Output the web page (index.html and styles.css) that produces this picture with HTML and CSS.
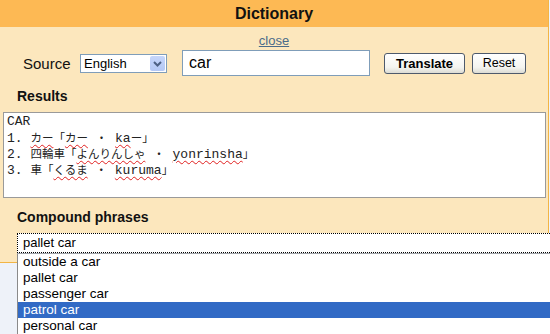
FILE: index.html
```html
<!DOCTYPE html>
<html>
<head>
<meta charset="utf-8">
<link rel="stylesheet" href="styles.css">
</head>
<body>
<div class="panel">
  <div class="header">Dictionary</div>
  <div class="close-row"><a class="close" href="#">close</a></div>
  <div class="form-row">
    <span class="label">Source</span>
    <div class="select">
      <span class="select-text">English</span>
      <span class="select-btn">
        <svg width="15" height="15" viewBox="0 0 15 15"><path d="M4 6 L7.5 9.5 L11 6" fill="none" stroke="#4d6185" stroke-width="2"/></svg>
      </span>
    </div>
    <div class="input">car</div>
    <button class="btn btn-bold">Translate</button>
    <button class="btn">Reset</button>
  </div>
  <div class="section-title">Results</div>
  <div class="results">
    <div class="line">CAR</div>
    <div class="line">1. <span class="ja sp">カー</span><span class="ja">「</span><span class="ja sp">カー</span> <span class="ja">・</span> <span class="sp">ka</span><span class="ja">ー」</span></div>
    <div class="line">2. <span class="ja">四輪車「</span><span class="ja sp">よんりんしゃ</span> <span class="ja">・</span> <span class="sp">yonrinsha</span><span class="ja">」</span></div>
    <div class="line">3. <span class="ja">車「</span><span class="ja sp">くるま</span> <span class="ja">・</span> <span class="sp">kuruma</span><span class="ja">」</span></div>
  </div>
  <div class="section-title section-title-2">Compound phrases</div>
  <div class="combo">pallet car</div>
  <ul class="dropdown">
    <li>outside a car</li>
    <li>pallet car</li>
    <li>passenger car</li>
    <li class="selected">patrol car</li>
    <li>personal car</li>
  </ul>
</div>
</body>
</html>
```
FILE: styles.css
```css
html, body {
  margin: 0;
  padding: 0;
}
body {
  background: #eef2f9;
  font-family: "Liberation Sans", Arial, sans-serif;
  width: 550px;
  height: 334px;
  overflow: hidden;
}
.panel {
  position: relative;
  width: 548px;
  background: #fce7bd;
  border-right: 1px solid #f2b545;
  border-bottom: 1px solid #f2b545;
  padding-bottom: 9px;
}
.header {
  height: 27px;
  line-height: 27px;
  background: #fdb954;
  text-align: center;
  font-weight: bold;
  font-size: 16px;
  color: #111;
}
.close-row {
  text-align: center;
  padding-top: 6px;
  height: 17px;
  font-size: 13px;
  line-height: 15px;
}
.close {
  color: #4a6b8a;
  text-decoration: underline;
}
.form-row {
  display: flex;
  align-items: center;
  height: 26px;
  padding-left: 23px;
}
.label {
  font-size: 15px;
  color: #111;
  width: 57px;
}
.select {
  display: flex;
  align-items: center;
  justify-content: space-between;
  box-sizing: border-box;
  width: 87px;
  height: 19px;
  background: #fff;
  border: 1px solid #7f9db9;
  font-size: 13px;
  color: #000;
  padding-left: 3px;
  padding-right: 1px;
}
.select-btn {
  display: flex;
  align-items: center;
  justify-content: center;
  width: 15px;
  height: 15px;
  background: linear-gradient(#c6d6fb, #b4c8f5);
  border-radius: 2px;
}
.input {
  box-sizing: border-box;
  margin-left: 15px;
  width: 188px;
  height: 26px;
  background: #fff;
  border: 1px solid #7f9db9;
  font-size: 16px;
  line-height: 24px;
  padding-left: 6px;
  color: #000;
}
.btn {
  box-sizing: border-box;
  height: 21px;
  margin: 0;
  padding: 0;
  border: 1px solid #4e5a6c;
  border-radius: 3px;
  background: linear-gradient(#ffffff, #f4f4f0 70%, #dcdcd4);
  font-family: "Liberation Sans", Arial, sans-serif;
  font-size: 13px;
  color: #000;
}
.btn-bold {
  margin-left: 14px;
  width: 81px;
  font-weight: bold;
}
.btn-bold + .btn {
  margin-left: 7px;
  width: 54px;
  font-size: 12.5px;
}
.section-title {
  margin-top: 12px;
  padding-left: 17px;
  font-size: 14px;
  line-height: 16px;
  font-weight: bold;
  color: #111;
}
.results {
  box-sizing: border-box;
  margin: 8px 0 0 3px;
  width: 543px;
  height: 86px;
  background: #fff;
  border: 1px solid #9a9a9a;
  padding: 1px 0 0 3px;
  font-family: "Liberation Mono", "Noto Sans CJK JP", monospace;
  font-size: 13px;
  color: #222;
}
.line {
  height: 16px;
  line-height: 16px;
  white-space: pre;
}
.ja {
  font-family: "Noto Sans CJK JP", sans-serif;
  font-size: 11.5px;
  line-height: 14px;
}
.sp {
  text-decoration: underline wavy #e02020;
  text-decoration-thickness: 1px;
  text-underline-offset: 2px;
}
.section-title-2 {
  margin-top: 11px;
}
.combo {
  box-sizing: border-box;
  margin: 8px 0 0 17px;
  width: 533px;
  height: 20px;
  background: #fff;
  border-top: 1px dotted #000;
  border-left: 1px dotted #000;
  border-bottom: 1px dotted #000;
  box-shadow: 0 1px 0 #a0a4aa;
  padding-left: 5px;
  font-size: 13px;
  line-height: 17px;
  color: #000;
}
.dropdown {
  position: absolute;
  left: 17px;
  top: 254px;
  width: 533px;
  margin: 0;
  padding: 0;
  list-style: none;
  background: #fff;
  border-left: 1px solid #8a8a8a;
  box-sizing: border-box;
  font-size: 13.5px;
  color: #000;
}
.dropdown li {
  height: 16px;
  line-height: 16px;
  padding-left: 5px;
}
.dropdown li.selected {
  background: #316ac5;
  color: #fff;
}
```
